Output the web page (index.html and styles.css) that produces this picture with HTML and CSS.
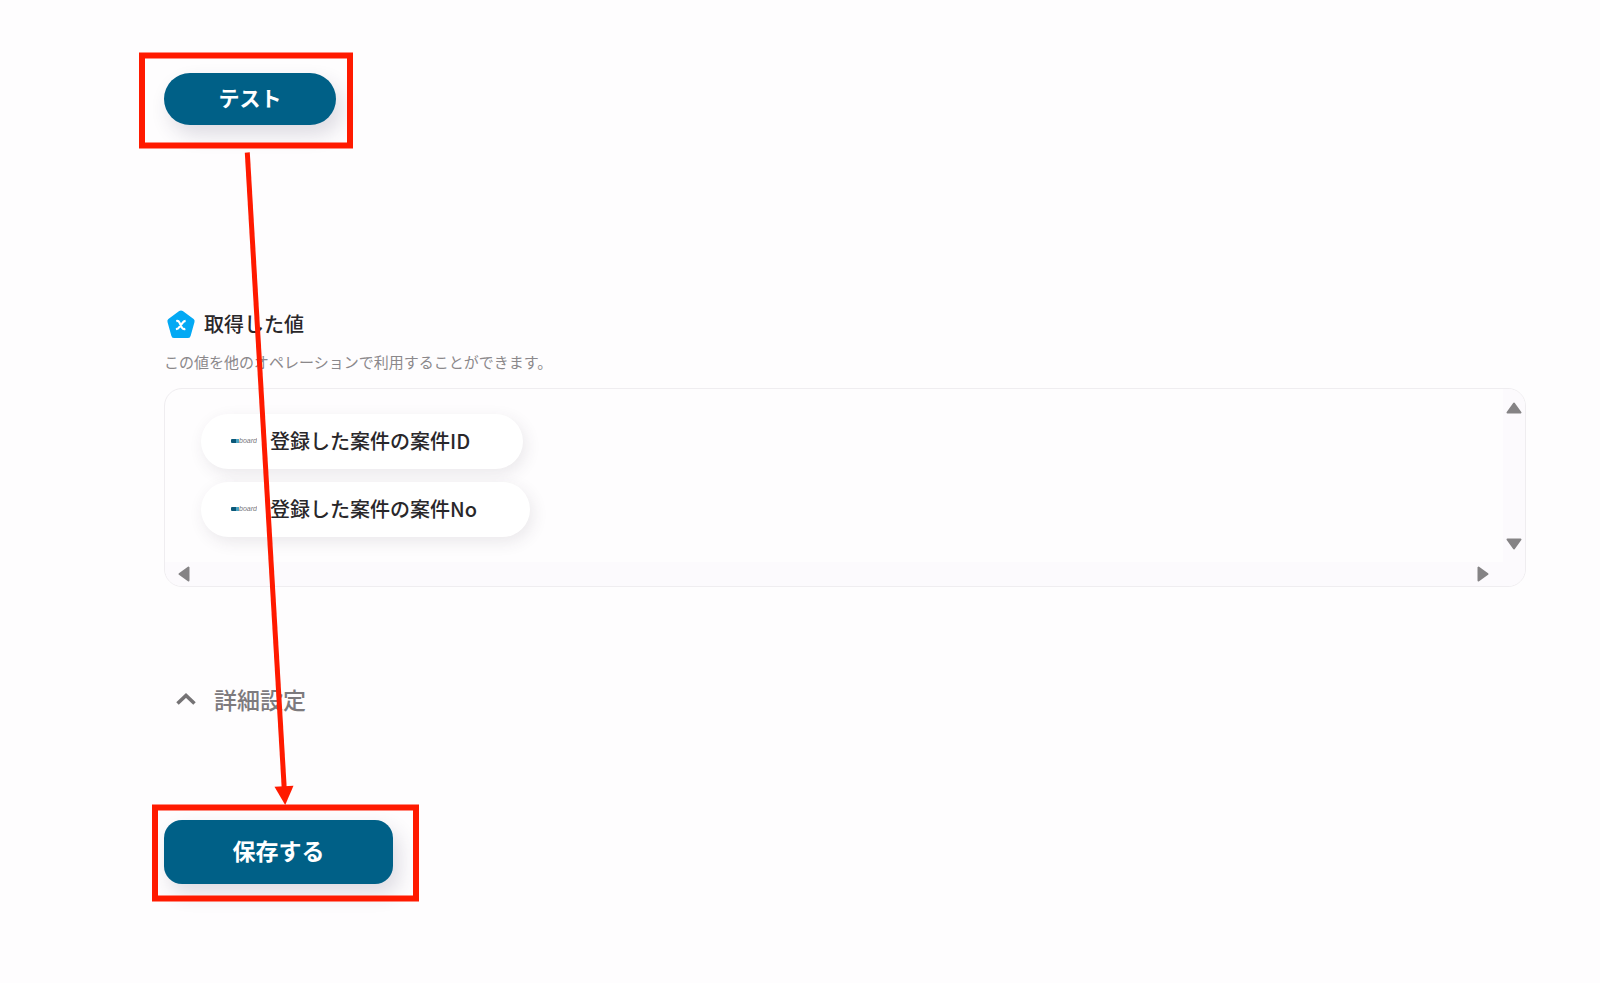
FILE: index.html
```html
<!DOCTYPE html>
<html lang="ja">
<head>
    <meta charset="UTF-8">
    <meta name="viewport" content="width=device-width, initial-scale=1.0">
    <title>オペレーション設定</title>
    <link rel="stylesheet" href="styles.css">
</head>
<body>

<main class="container">
    <button type="button" class="btn btn-test">テスト</button>

    <section class="values">
        <h2 class="values-title">
            <svg class="values-icon" viewBox="0 0 28 30" aria-hidden="true">
                <path d="M12.2 2.1Q14 .7 15.8 2.1L26.6 10.1Q28 11.3 27.5 13.1L23.6 26.9Q22.9 29.1 20.7 29.1H7.3Q5.1 29.1 4.4 26.9L.5 13.1Q0 11.3 1.4 10.1Z" fill="#03a9f4"/>
                <path d="M9.3 12.1Q11.5 11.5 12.5 13.6L14.9 18.6Q15.8 20.6 18.3 19.9M18.6 11.9Q16.7 12.1 15.3 14.1L12.4 18Q11.100 20 8.900 20.200" fill="none" stroke="#fff" stroke-width="2.200"/>
            </svg>
            取得した値
        </h2>
        <p class="values-note">この値を他のオペレーションで利用することができます。</p>

        <div class="panel">
            <ul class="chips">
                <li class="chip">
                    <svg class="chip-logo" viewBox="0 0 26 6" aria-hidden="true">
                        <rect x="0" y="1" width="7" height="4" rx="1" fill="#0b5878"/>
                        <rect x="5" y="1" width="3" height="4" fill="#4aa3c4"/>
                        <text x="8" y="5" class="logo-text">board</text>
                    </svg>
                    登録した案件の案件ID
                </li>
                <li class="chip">
                    <svg class="chip-logo" viewBox="0 0 26 6" aria-hidden="true">
                        <rect x="0" y="1" width="7" height="4" rx="1" fill="#0b5878"/>
                        <rect x="5" y="1" width="3" height="4" fill="#4aa3c4"/>
                        <text x="8" y="5" class="logo-text">board</text>
                    </svg>
                    登録した案件の案件No
                </li>
            </ul>
            <div class="scroll-y">
                <button type="button" class="scroll-btn" aria-label="上へ">
                    <svg width="16" height="12" viewBox="0 0 16 12"><path d="M8 1.500L14.500 10.500H1.500Z"/></svg>
                </button>
                <button type="button" class="scroll-btn" aria-label="下へ">
                    <svg width="16" height="12" viewBox="0 0 16 12"><path d="M8 10.500L14.500 1.500H1.500Z"/></svg>
                </button>
            </div>
            <div class="scroll-x">
                <button type="button" class="scroll-btn" aria-label="左へ">
                    <svg width="12" height="16" viewBox="0 0 12 16"><path d="M1.500 8L10.500 1.500V14.500Z"/></svg>
                </button>
                <button type="button" class="scroll-btn" aria-label="右へ">
                    <svg width="12" height="16" viewBox="0 0 12 16"><path d="M10.500 8L1.500 1.500V14.500Z"/></svg>
                </button>
            </div>
        </div>
    </section>

    <button type="button" class="toggle">
        <svg width="20" height="12" viewBox="0 0 20 12" aria-hidden="true">
            <path d="M1.500 10.500L10 2.500L18.500 10.500" fill="none" stroke="#757375" stroke-width="3.600"/>
        </svg>
        詳細設定
    </button>

    <button type="button" class="btn btn-save">保存する</button>
</main>

<!-- step marks drawn over the form -->
<svg class="marks" width="440" height="920" viewBox="0 0 440 920" aria-hidden="true">
    <rect x="142" y="55.500" width="208" height="90"/>
    <path d="M247.300 152.500L284.200 788"/>
    <path class="marks-head" d="M274.500 786.700L293.500 785.700L285.200 805Z"/>
    <rect x="155" y="807.500" width="261" height="91"/>
</svg>

</body>
</html>
```

FILE: styles.css
```css
* {
    box-sizing: border-box;
}

body {
    margin: 0;
    background-color: #fefdfe;
    color: #29272a;
    font-family: "Noto Sans CJK JP", sans-serif;
}

button {
    border: none;
    font-family: inherit;
    cursor: pointer;
}

.container {
    display: flex;
    flex-direction: column;
    align-items: flex-start;
    padding: 73px 74px 72px 164px;
}

.btn {
    padding: 0 0 4px;
    background-color: #006087;
    color: #fff;
    line-height: 32px;
    font-weight: 700;
    box-shadow: 6px 10px 20px rgba(50, 45, 80, 0.16);
}

.btn-test {
    width: 172px;
    height: 52px;
    border-radius: 26px;
    font-size: 21px;
}

.btn-save {
    width: 229px;
    height: 64px;
    margin-top: 105px;
    border-radius: 18px;
    font-size: 23px;
}

.values {
    align-self: stretch;
    margin-top: 183px;
}

.values-title {
    display: flex;
    align-items: center;
    gap: 9px;
    margin: 0;
    padding-left: 3px;
    font-size: 20px;
    line-height: 32px;
    font-weight: 500;
}

.values-icon {
    width: 28px;
    height: 30px;
}

.values-note {
    margin: 10px 0 14px;
    color: #8b888b;
    font-size: 15px;
    line-height: 24px;
}

.panel {
    display: grid;
    grid-template-columns: 1fr 22px;
    grid-template-rows: 1fr 24px;
    border: 1px solid #efedf0;
    border-radius: 18px;
    overflow: hidden;
}

.chips {
    display: flex;
    flex-direction: column;
    align-items: flex-start;
    gap: 13px;
    margin: 0;
    padding: 25px 36px;
    list-style: none;
}

.chip {
    display: flex;
    align-items: center;
    gap: 13px;
    height: 55px;
    padding: 0 53px 2px 30px;
    border-radius: 28px;
    background-color: #fff;
    font-size: 20px;
    font-weight: 500;
    box-shadow: 3px 5px 16px rgba(60, 45, 70, 0.1);
}

.chip-logo {
    width: 26px;
    height: 6px;
}

.logo-text {
    fill: #77777c;
    font-family: "Liberation Sans", sans-serif;
    font-size: 7px;
    font-style: italic;
}

.scroll-y,
.scroll-x {
    display: flex;
    justify-content: space-between;
    background-color: #fcfafd;
}

.scroll-y {
    flex-direction: column;
    align-items: center;
    padding: 13px 0 12px;
}

.scroll-x {
    grid-column: 1 / 3;
    align-items: center;
    padding: 0 36px 0 13px;
}

.scroll-btn {
    display: flex;
    padding: 0;
    background: none;
}

.scroll-btn path {
    fill: #858385;
    stroke: #858385;
    stroke-width: 2;
    stroke-linejoin: round;
}

.toggle {
    display: flex;
    align-items: center;
    gap: 18px;
    margin-top: 96px;
    padding: 0 12px;
    background: none;
    color: #7d7a7d;
    font-size: 23px;
    line-height: 32px;
    font-weight: 500;
}

.marks {
    position: absolute;
    top: 0;
    left: 0;
    fill: none;
    stroke: #ff1a00;
    stroke-width: 6;
    pointer-events: none;
}

.marks path {
    stroke-width: 5;
}

.marks .marks-head {
    fill: #ff1a00;
    stroke: none;
}
```
